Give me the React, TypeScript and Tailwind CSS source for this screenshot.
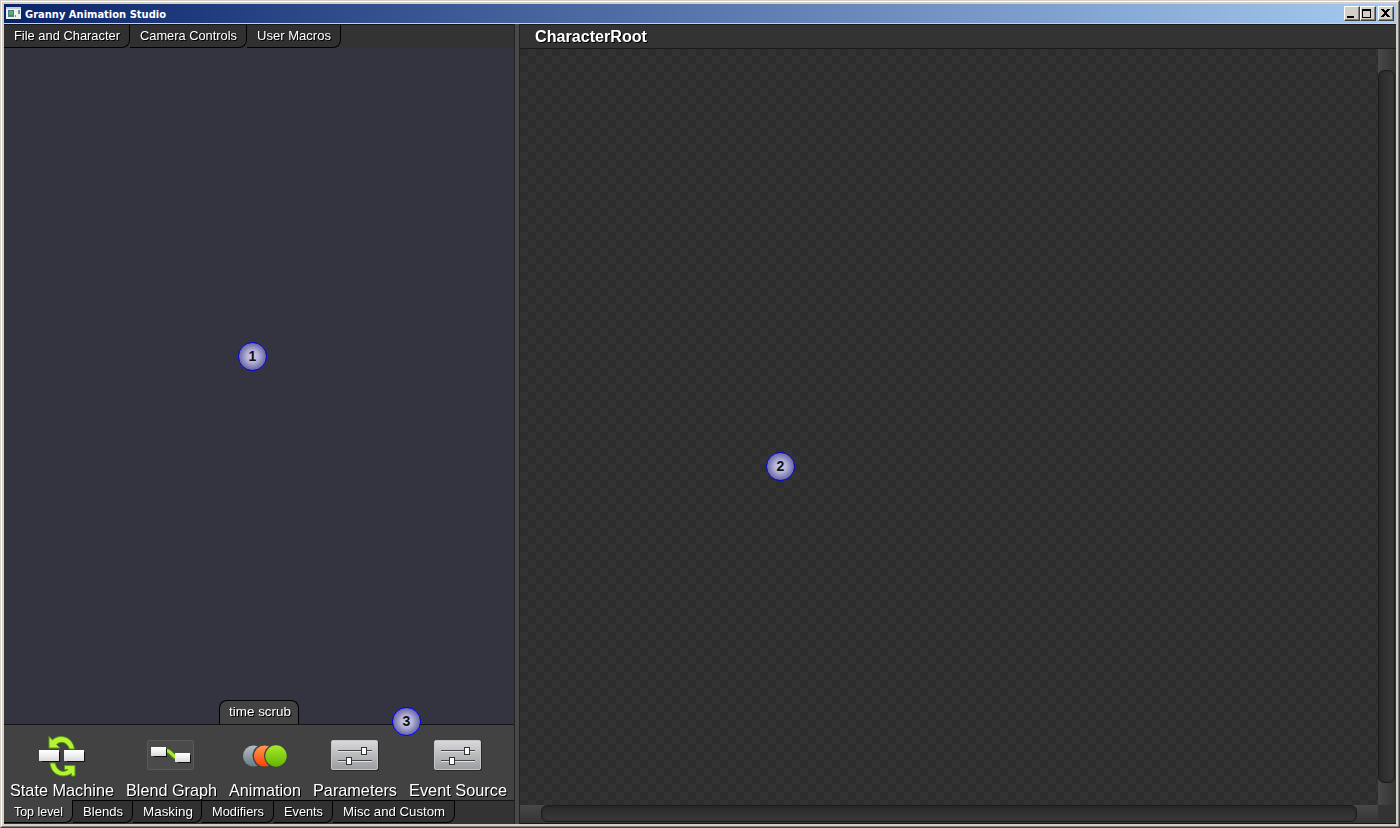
import type { ReactNode } from "react";

function Label({ text, width, size = 13, weight = 400 }: { text: string; width: number; size?: number; weight?: number }) {
  return (
    <svg width={width} height="20" className="block overflow-visible font-['Liberation_Sans',Arial,sans-serif] [filter:drop-shadow(1px_1px_0_#000)]">
      <text x="0" y="15" fontSize={size} fontWeight={weight} fill="#fff" textLength={width} lengthAdjust="spacingAndGlyphs">{text}</text>
    </svg>
  );
}

function Badge({ n, className }: { n: number; className: string }) {
  return (
    <div className={`absolute z-20 flex size-[29px] items-center justify-center rounded-full border border-[#0000ff] bg-[radial-gradient(circle_closest-side,#d0cdec_0%,#b4b1d8_45%,#8481b6_80%,#6c69a2_100%)] font-['Liberation_Sans',Arial,sans-serif] text-[14px] leading-none font-bold text-[#111] ${className}`}>
      <span className="relative -top-px">{n}</span>
    </div>
  );
}

const topTabs = [
  { t: "File and Character", w: 106, c: "w-[126px]" },
  { t: "Camera Controls", w: 97, c: "w-[117px]" },
  { t: "User Macros", w: 74, c: "w-[94px]" },
];
const bottomTabs = [
  { t: "Top level", w: 49, c: "w-[69px] bg-[#424242] pt-px" },
  { t: "Blends", w: 40, c: "w-[60px] bg-[#303030] border-t" },
  { t: "Masking", w: 50, c: "w-[69px] bg-[#303030] border-t" },
  { t: "Modifiers", w: 52, c: "w-[72px] bg-[#303030] border-t" },
  { t: "Events", w: 39, c: "w-[59px] bg-[#303030] border-t" },
  { t: "Misc and Custom", w: 102, c: "w-[122px] bg-[#303030] border-t" },
];

function WhiteBox({ x, y, w, h }: { x: number; y: number; w: number; h: number }) {
  return (
    <g>
      <rect x={x + 3} y={y + 2} width={w - 2} height={h - 1} fill="#111" />
      <rect x={x} y={y} width={w} height={h} fill="url(#white)" />
    </g>
  );
}

function StateIcon() {
  return (
    <svg width="48" height="42" viewBox="0 0 48 42" className="shrink-0">
      <defs>
        <linearGradient id="white" x2="0" y2="1"><stop stopColor="#fff" /><stop offset=".5" stopColor="#f0f0f0" /><stop offset="1" stopColor="#dadada" /></linearGradient>
      </defs>
      <g fill="#b4f434" stroke="#5a9a13" strokeWidth="1">
        <path d="M11 .5V12H22L18.500 8.500C23 4.500 29 6 31.500 13H36.500C34 -1 20 -2 14.500 4Z" />
        <path d="M37 29.500V40H33.500V37.500C25 43 13 39 12 27H17C19 35 25 37.500 30 33.500H26.500V29.500Z" />
      </g>
      <WhiteBox x={1} y={14} w={20} h={11} />
      <WhiteBox x={26} y={14} w={20} h={11} />
    </svg>
  );
}

function BlendIcon() {
  return (
    <svg width="48" height="42" viewBox="0 0 48 42" className="block shrink-0">
      <rect x=".5" y="4.500" width="46" height="29" rx="1.500" fill="#4a4a4a" stroke="#5a5a5a" />
      <path d="M19 15C25 15 24 21 31 22.500" stroke="#568710" strokeWidth="5" fill="none" />
      <path d="M19 14.500C25 14.500 24 20.500 31 22" stroke="#a9e934" strokeWidth="3" fill="none" />
      <WhiteBox x={4} y={11} w={15} h={9} />
      <WhiteBox x={28} y={17} w={15} h={9} />
    </svg>
  );
}

function AnimationIcon() {
  return (
    <svg width="46" height="42" viewBox="0 0 46 42" className="shrink-0">
      <defs>
        <linearGradient id="gray" x2="0" y2="1"><stop stopColor="#b4bec3" /><stop offset="1" stopColor="#697b84" /></linearGradient>
        <linearGradient id="orange" x2="0" y2="1"><stop stopColor="#ff9955" /><stop offset="1" stopColor="#ff4200" /></linearGradient>
        <linearGradient id="green" x2="0" y2="1"><stop stopColor="#a9e92d" /><stop offset="1" stopColor="#61b400" /></linearGradient>
      </defs>
      <circle cx="11.500" cy="20" r="10.500" fill="url(#gray)" />
      <circle cx="22.500" cy="20" r="12" fill="#424242" />
      <circle cx="22.500" cy="20" r="10.500" fill="url(#orange)" />
      <circle cx="34" cy="20" r="12" fill="#424242" />
      <circle cx="34" cy="20" r="10.700" fill="url(#green)" />
    </svg>
  );
}

function SlidersIcon() {
  return (
    <svg width="48" height="42" viewBox="0 0 48 42" className="shrink-0">
      <defs>
        <linearGradient id="metal" x2="0" y2="1"><stop stopColor="#d9d9da" /><stop offset="1" stopColor="#9c9da0" /></linearGradient>
      </defs>
      <rect x="1" y="5" width="47" height="30" rx="2" fill="#292929" />
      <rect x=".5" y="4.500" width="46" height="29" rx="1.500" fill="url(#metal)" stroke="#c5c5c7" />
      <path d="M7 15.500H41M7 25.500H41" stroke="#e2e2e2" />
      <path d="M7 14.500H41M7 24.500H41" stroke="#45464a" />
      <rect x="30.500" y="11.500" width="5" height="7" fill="#fafafa" stroke="#333" />
      <rect x="15.500" y="21.500" width="5" height="7" fill="#fafafa" stroke="#333" />
    </svg>
  );
}

const tools: { t: string; w: number; icon: ReactNode; c: string }[] = [
  { t: "State Machine", w: 104, icon: <StateIcon />, c: "ml-[6px] w-[104px]" },
  { t: "Blend Graph", w: 91, icon: <div className="-ml-px"><BlendIcon /></div>, c: "ml-[12px] w-[91px]" },
  { t: "Animation", w: 72, icon: <AnimationIcon />, c: "ml-[12px] w-[72px]" },
  { t: "Parameters", w: 84, icon: <SlidersIcon />, c: "ml-[12px] w-[84px]" },
  { t: "Event Source", w: 98, icon: <SlidersIcon />, c: "ml-[12px] w-[98px]" },
];

function WinButton({ children, className = "" }: { children: ReactNode; className?: string }) {
  return (
    <button className={`h-[15px] w-4 border border-t-white border-l-white border-r-[#404040] border-b-[#404040] bg-[#d4d0c8] shadow-[inset_-1px_-1px_0_#808080] ${className}`}>
      <svg width="14" height="13" viewBox="0 0 14 13" className="block" shapeRendering="crispEdges">{children}</svg>
    </button>
  );
}

export default function App() {
  return (
    <div className="relative flex h-[828px] w-[1400px] flex-col overflow-hidden border-t border-r border-b border-l border-t-[#d4d0c8] border-r-[#404040] border-b-[#404040] border-l-[#d4d0c8] bg-[#d4d0c8]">
      <div className="flex h-[826px] w-[1398px] flex-col border border-t-white border-r-[#808080] border-b-[#808080] border-l-white p-[2px]">
        <header className="flex h-[19px] shrink-0 items-center bg-[linear-gradient(90deg,#0a246a,#a6caf0)] pr-[2px] pl-[2px]">
          <svg width="16" height="16" viewBox="0 0 16 16" shapeRendering="crispEdges">
            <path d="M0 1H15V13H0Z" fill="#edf1ed" /><path d="M0 1H15V3H0Z" fill="#c8ccc8" />
            <path d="M2 4H8V11H2Z" fill="#477f87" /><path d="M3 5H7V9H3Z" fill="#5aa979" />
            <path d="M12 4H14V8H12Z" fill="#6f9297" /><path d="M9 9H10V11H9Z" fill="#6f9297" />
          </svg>
          <svg width="160" height="19" className="ml-[3px] font-['DejaVu_Sans_Condensed','DejaVu_Sans',sans-serif]">
            <text x="0" y="14" fontSize="11" fontWeight="700" fill="#fff" textLength="141" lengthAdjust="spacingAndGlyphs">Granny Animation Studio</text>
          </svg>
          <div className="ml-auto flex">
            <WinButton><path d="M2 9H9V11H2Z" /></WinButton>
            <WinButton><path fillRule="evenodd" d="M1 2H10V11H1ZM2 4V10H9V4Z" /></WinButton>
            <WinButton className="ml-[2px]">
              <path d="M2 2H5V3H2ZM8 2H11V3H8ZM3 3H6V4H3ZM7 3H10V4H7ZM4 4H9V5H4ZM5 5H8V7H5ZM4 7H9V8H4ZM3 8H6V9H3ZM7 8H10V9H7ZM2 9H5V10H2ZM8 9H11V10H8Z" />
            </WinButton>
          </div>
        </header>
        <main className="mt-px flex h-[800px] w-[1392px] shrink-0 bg-[#333]">
          <section className="flex w-[510px] flex-col bg-[#343340]">
            <div className="flex h-6 border-t border-[#151515] bg-[#333]">
              {topTabs.map((x) => (
                <div key={x.t} className={`h-[23px] shrink-0 rounded-br-[8px] border-r border-b border-black bg-[#303030] pl-[10px] ${x.c}`}>
                  <Label text={x.t} width={x.w} />
                </div>
              ))}
            </div>
            <div className="flex flex-1 items-end">
              <div className="ml-[215px] h-6 w-[80px] rounded-t-[8px] border border-b-0 border-black bg-[#424242] pl-[9px]">
                <Label text="time scrub" width={62} />
              </div>
            </div>
            <div className="flex h-[76px] border-t border-[#161616] bg-[#424242] pt-[11px]">
              {tools.map((x) => (
                <div key={x.t} className={`flex shrink-0 flex-col items-center ${x.c}`}>
                  {x.icon}
                  <div className="mt-[3px]"><Label text={x.t} width={x.w} size={17} /></div>
                </div>
              ))}
            </div>
            <div className="flex h-6 bg-[linear-gradient(#151515_1px,#333_1px)]">
              {bottomTabs.map((x) => (
                <div key={x.t} className={`flex h-[23px] shrink-0 items-start rounded-br-[8px] border-r border-b border-black pl-[10px] ${x.c}`}>
                  <Label text={x.t} width={x.w} />
                </div>
              ))}
            </div>
          </section>
          <div className="w-[6px] border-x border-[#222] bg-[#484848]" />
          <section className="flex w-[876px] flex-col">
            <div className="h-[25px] border-y border-[#1a1a1a] bg-[#333] pt-[2px] pl-[15px]">
              <Label text="CharacterRoot" width={112} size={16} weight={700} />
            </div>
            <div className="flex h-[756px]">
              <div className="w-[858px] bg-[conic-gradient(#333_25%,#2d2d2d_0_50%,#333_0_75%,#2d2d2d_0)] bg-[length:16px_16px] bg-[position:0_-1px]" />
              <div className="flex w-[18px] flex-col bg-[linear-gradient(90deg,#484848,#333)] pt-[21px]">
                <div className="h-[713px] w-[17px] rounded-[6px] border border-[#1d1d1d] bg-[linear-gradient(90deg,#292929,#393939)] shadow-[inset_0_0_2px_#1d1d1d]" />
              </div>
            </div>
            <div className="flex h-[19px] border-b border-[#181818]">
              <div className="w-[858px] bg-[linear-gradient(#484848,#333)] pl-[21px]">
                <div className="h-[17px] w-[816px] rounded-[6px] border border-[#1d1d1d] bg-[linear-gradient(#292929,#393939)] shadow-[inset_0_0_2px_#1d1d1d]" />
              </div>
              <div className="w-[18px] bg-[#333]" />
            </div>
          </section>
        </main>
      </div>
      <Badge n={1} className="top-[341px] left-[237px]" />
      <Badge n={2} className="top-[451px] left-[765px]" />
      <Badge n={3} className="top-[706px] left-[391px]" />
    </div>
  );
}
